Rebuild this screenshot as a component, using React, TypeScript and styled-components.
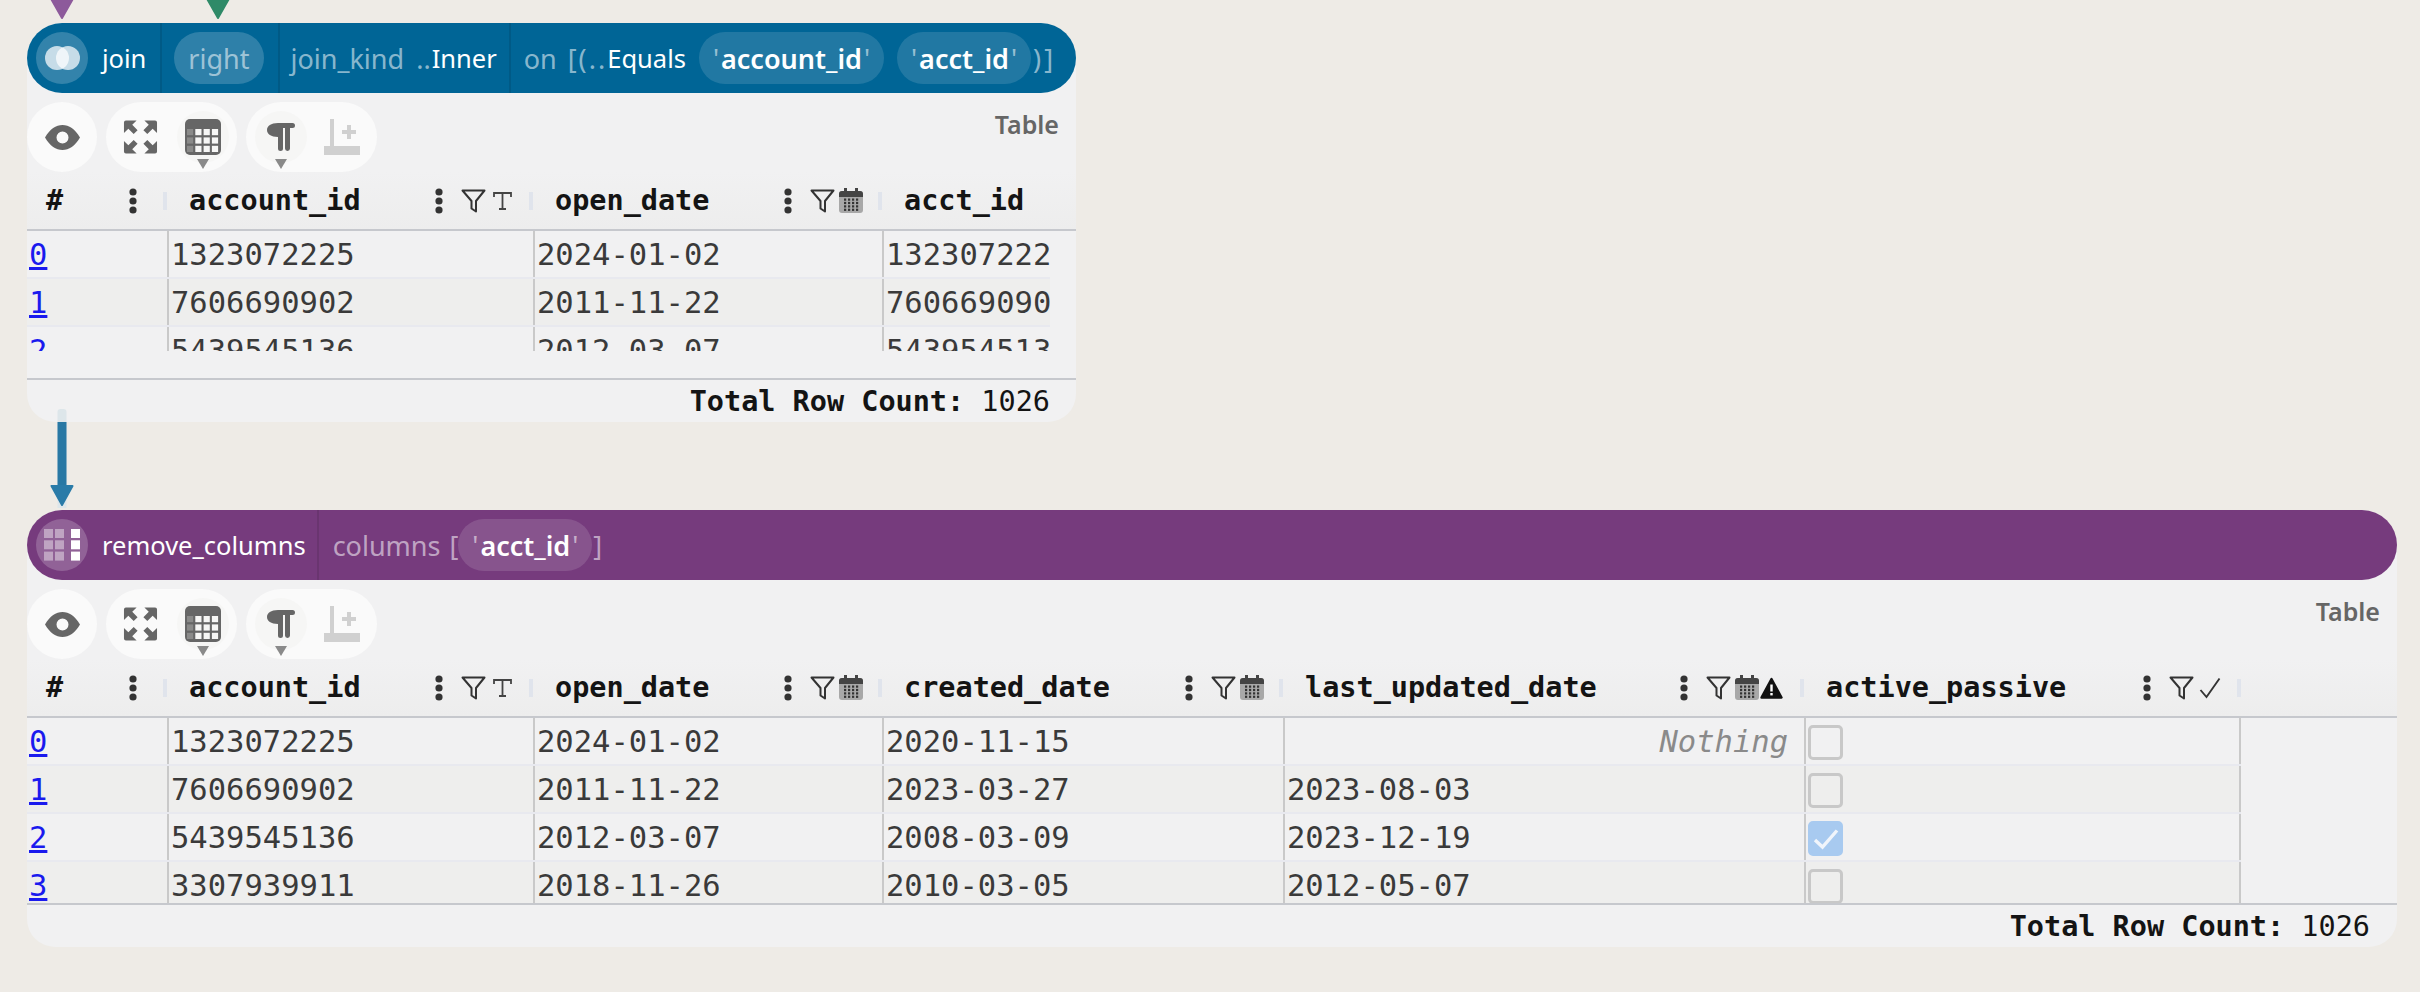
import React from 'react';
import styled, { createGlobalStyle } from 'styled-components';

const GlobalStyle = createGlobalStyle`
  html, body {
    margin: 0;
    padding: 0;
    background: #eeebe6;
  }
`;

const Canvas = styled.div`
  width: 2420px;
  height: 992px;
  padding-left: 27px;
  box-sizing: border-box;
  overflow: hidden;
`;

const EdgeGap = styled.div<{ $height: number }>`
  position: relative;
  height: ${(p) => p.$height}px;
`;

const EdgeSvg = styled.svg<{ $left: number; $top: number }>`
  position: absolute;
  left: ${(p) => p.$left}px;
  top: ${(p) => p.$top}px;
`;

const Panel = styled.section<{ $width: number }>`
  width: ${(p) => p.$width}px;
  background: #f1f1f2;
  border-radius: 35px 35px 28px 28px;
  display: flex;
  flex-direction: column;
`;

const NodeHeader = styled.header<{ $bg: string }>`
  height: 70px;
  border-radius: 35px;
  background: ${(p) => p.$bg};
  display: flex;
  align-items: stretch;
  font: 400 25.5px 'Noto Sans', sans-serif;
  color: #fff;
  white-space: nowrap;
`;

const Segment = styled.div<{ $pl?: number; $pr?: number; $last?: boolean }>`
  display: flex;
  align-items: center;
  padding-left: ${(p) => p.$pl ?? 11}px;
  padding-right: ${(p) => p.$pr ?? 14}px;
  border-right: ${(p) => (p.$last ? 'none' : '2px solid rgba(0, 0, 0, 0.1)')};
`;

const IconCircle = styled.div`
  width: 52px;
  height: 52px;
  border-radius: 50%;
  background: rgba(255, 255, 255, 0.2);
  display: flex;
  align-items: center;
  justify-content: center;
  margin-right: 14px;
`;

const Dim = styled.span<{ $ml?: number; $ls?: number }>`
  color: rgba(255, 255, 255, 0.55);
  font-size: 27px;
  font-weight: 400;
  margin-left: ${(p) => p.$ml ?? 0}px;
  letter-spacing: ${(p) => p.$ls ?? 0}px;
`;

const Bright = styled.span<{ $mx?: number; $ml?: number }>`
  color: #fff;
  margin: 0 ${(p) => p.$mx ?? 0}px 0 ${(p) => p.$ml ?? p.$mx ?? 0}px;
`;

const Chip = styled.span<{ $ml?: number; $tint?: number; $bold?: boolean }>`
  height: 52px;
  border-radius: 26px;
  padding: 0 14px;
  display: inline-flex;
  align-items: center;
  background: rgba(255, 255, 255, ${(p) => p.$tint ?? 0.13});
  margin-left: ${(p) => p.$ml ?? 0}px;
  font-size: 27px;
  font-weight: ${(p) => (p.$bold ? 600 : 400)};
`;

const Toolbar = styled.div`
  height: 70px;
  margin-top: 9px;
  display: flex;
  gap: 9px;
  position: relative;
`;

const ToolPill = styled.div<{ $width: number }>`
  width: ${(p) => p.$width}px;
  height: 70px;
  border-radius: 35px;
  background: #fafafa;
  display: flex;
  align-items: center;
`;

const ToolSlot = styled.div<{ $width: number; $ring?: boolean; $ml?: number }>`
  width: ${(p) => p.$width}px;
  height: 52px;
  margin-left: ${(p) => p.$ml ?? 0}px;
  border-radius: 26px;
  background: ${(p) => (p.$ring ? '#f6f6f5' : 'transparent')};
  display: flex;
  align-items: center;
  justify-content: center;
  position: relative;
`;

const Caret = styled.span`
  position: absolute;
  left: 50%;
  bottom: -6px;
  margin-left: -6px;
  border-left: 6px solid transparent;
  border-right: 6px solid transparent;
  border-top: 10px solid #8a8a8a;
`;

const TableLabel = styled.div`
  margin: 0 17px 0 auto;
  padding-top: 5px;
  font: 600 25px 'Noto Sans', sans-serif;
  color: #666;
`;

const HeadRow = styled.div<{ $cols: string }>`
  height: 57px;
  display: grid;
  grid-template-columns: ${(p) => p.$cols};
  background: linear-gradient(#f1f1f2, #ededed);
  border-bottom: 2px solid #c6c8cd;
`;

const HeadCell = styled.div<{ $pl: number }>`
  display: flex;
  align-items: center;
  padding-left: ${(p) => p.$pl}px;
  font: 700 28.5px 'DejaVu Sans Mono', monospace;
  color: #141414;
  min-width: 0;
`;

const HeadName = styled.span`
  flex: 1;
  white-space: pre;
`;

const Kebab = styled.svg<{ $mr: number }>`
  flex: none;
  margin-right: ${(p) => p.$mr}px;
`;

const FilterSvg = styled.svg`
  flex: none;
  margin-right: 4px;
`;

const TypeSvg = styled.svg<{ $ml?: number }>`
  flex: none;
  margin-left: ${(p) => p.$ml ?? 0}px;
`;

const TypeIcons = styled.div<{ $width: number }>`
  width: ${(p) => p.$width}px;
  display: flex;
  align-items: center;
  gap: 4px;
`;

const ColSep = styled.span`
  flex: none;
  width: 4px;
  height: 18px;
  background: #e0e4ec;
`;

const TableBody = styled.div<{ $height: number; $width: number }>`
  height: ${(p) => p.$height}px;
  width: ${(p) => p.$width}px;
  overflow: hidden;
`;

const Row = styled.div<{ $cols: string; $odd: boolean }>`
  height: 48px;
  box-sizing: border-box;
  display: grid;
  grid-template-columns: ${(p) => p.$cols};
  background: ${(p) => (p.$odd ? '#eeeeed' : '#f1f1f2')};
  border-bottom: 2px solid #e8e9ef;
`;

const Cell = styled.div<{ $closed?: boolean; $index?: boolean }>`
  border-left: ${(p) => (p.$index ? 'none' : '2px solid #c9c9c9')};
  border-right: ${(p) => (p.$closed ? '2px solid #c9c9c9' : 'none')};
  padding-left: 2px;
  font: 400 30.5px/48px 'DejaVu Sans Mono', monospace;
  color: #3a3a3a;
  overflow: hidden;
  white-space: nowrap;
`;

const IndexLink = styled.a`
  color: #1a1aee;
  text-decoration: underline;
`;

const Missing = styled.div`
  text-align: right;
  padding-right: 16px;
  font-style: italic;
  color: #8a8a8a;
`;

const Check = styled.div<{ $on: boolean }>`
  width: 35px;
  height: 35px;
  box-sizing: border-box;
  margin: 7px 0 0 0;
  border-radius: 5px;
  border: 3px solid ${(p) => (p.$on ? '#a8caf0' : '#c8c8c8')};
  background: ${(p) => (p.$on ? '#a8caf0' : 'transparent')};
  display: flex;
  align-items: center;
  justify-content: center;
`;

const Footer = styled.div<{ $gap: number; $pr: number }>`
  height: 42px;
  margin-top: ${(p) => p.$gap}px;
  border-top: 2px solid #c6c8cd;
  padding-right: ${(p) => p.$pr}px;
  display: flex;
  align-items: center;
  justify-content: flex-end;
  font: 400 28.5px 'DejaVu Sans Mono', monospace;
  color: #141414;
  white-space: pre;
`;

const FooterLabel = styled.b`
  font-weight: 700;
`;

const KebabIcon = ({ mr = 18 }: { mr?: number }) => (
  <Kebab $mr={mr} width="8" height="26" viewBox="0 0 8 26">
    <circle cx="4" cy="4" r="3.6" fill="#333" />
    <circle cx="4" cy="13" r="3.6" fill="#333" />
    <circle cx="4" cy="22" r="3.6" fill="#333" />
  </Kebab>
);

const FilterIcon = () => (
  <FilterSvg width="25" height="24" viewBox="0 0 25 24">
    <path d="M1.5 1.5H23.5L15 12V22.5L10.5 19.5V12Z" fill="none" stroke="#333" strokeWidth="2" strokeLinejoin="round" />
  </FilterSvg>
);

const TextTypeIcon = () => (
  <TypeSvg width="24" height="20" viewBox="0 0 24 20">
    <path d="M4 6V2H21V6M12.5 2V18M9 18H16" fill="none" stroke="#444" strokeWidth="1.8" />
  </TypeSvg>
);

const CalendarIcon = () => (
  <TypeSvg width="24" height="25" viewBox="0 0 24 25">
    <rect x="0" y="3" width="24" height="22" rx="3" fill="#a8a8a8" />
    <path d="M0 9V6a3 3 0 0 1 3-3h18a3 3 0 0 1 3 3v3Z" fill="#444" />
    <rect x="5" y="0" width="3" height="5" fill="#444" />
    <rect x="16" y="0" width="3" height="5" fill="#444" />
    {[0, 1, 2, 3].flatMap((r) =>
      [0, 1, 2, 3].map((c) => (
        <rect key={`${r}-${c}`} x={5 + c * 4} y={10.5 + r * 3.4} width="2.2" height="2.2" fill="#333" />
      ))
    )}
  </TypeSvg>
);

const WarningIcon = () => (
  <TypeSvg $ml={-3} width="23" height="22" viewBox="0 0 23 22">
    <path d="M11.5 2L21.5 20.5H1.5Z" fill="#111" stroke="#111" strokeWidth="2.4" strokeLinejoin="round" />
    <rect x="10.3" y="7.5" width="2.4" height="7" fill="#fff" />
    <rect x="10.3" y="16" width="2.4" height="2.4" fill="#fff" />
  </TypeSvg>
);

const BoolTypeIcon = () => (
  <TypeSvg $ml={1} width="22" height="22" viewBox="0 0 22 22">
    <path d="M1.5 13L7.5 20L20.5 1.5" fill="none" stroke="#333" strokeWidth="1.9" />
  </TypeSvg>
);

const EyeIcon = () => (
  <svg width="35" height="25" viewBox="0 0 35 25">
    <path
      fillRule="evenodd"
      d="M0 12.5C5 4 11 0 17.5 0S30 4 35 12.5C30 21 24 25 17.5 25S5 21 0 12.5ZM17.5 6.5a6 6 0 1 0 0 12a6 6 0 0 0 0-12Z"
      fill="#666"
    />
  </svg>
);

const cornerArrow = 'M1 3a2 2 0 0 1 2-2H14L9.5 5.5L15 11L11 15L5.5 9.5L1 14Z';

const ExpandIcon = () => (
  <svg width="35" height="36" viewBox="0 0 36 36" fill="#666" style={{ marginRight: 3 }}>
    <path d={cornerArrow} />
    <path transform="matrix(-1 0 0 1 36 0)" d={cornerArrow} />
    <path transform="matrix(1 0 0 -1 0 36)" d={cornerArrow} />
    <path transform="matrix(-1 0 0 -1 36 36)" d={cornerArrow} />
  </svg>
);

const TableIcon = () => (
  <svg width="36" height="36" viewBox="0 0 36 36">
    <rect width="36" height="36" rx="5" fill="#666" />
    {[0, 1, 2].flatMap((r) =>
      [0, 1, 2, 3].map((c) => (
        <rect
          key={`${r}-${c}`}
          x={2 + c * 8.3}
          y={10 + r * 8.4}
          width="6.2"
          height="6.2"
          fill="#f6f6f5"
          fillOpacity={c === 0 ? 0.25 : 1}
        />
      ))
    )}
  </svg>
);

const PilcrowIcon = () => (
  <svg width="28" height="28" viewBox="0 0 28 28">
    <path
      d="M11 0H25.5a2.5 2.5 0 0 1 0 5H23V25.5a2.5 2.5 0 0 1-5 0V5H16V25.5a2.5 2.5 0 0 1-5 0V14C4 14 0 11 0 7S4 0 11 0Z"
      fill="#666"
    />
  </svg>
);

const AddColumnIcon = () => (
  <svg width="36" height="36" viewBox="0 0 36 36" fill="#d0d0d0">
    <rect x="0" y="27" width="36" height="9" />
    <rect x="6" y="0" width="4" height="27" />
    <rect x="18" y="11" width="14" height="4" />
    <rect x="23" y="6" width="4" height="14" />
  </svg>
);

const JoinIcon = () => (
  <svg width="35" height="24" viewBox="0 0 35 24">
    <circle cx="12" cy="12" r="12" fill="#fff" fillOpacity="0.72" />
    <circle cx="23" cy="12" r="12" fill="#fff" fillOpacity="0.72" />
  </svg>
);

const RemoveColumnsIcon = () => (
  <svg width="36" height="32" viewBox="0 0 36 32" fill="#fff">
    {[0, 1, 2].flatMap((r) =>
      [0, 11, 27].map((x) => (
        <rect key={`${r}-${x}`} x={x} y={r * 11.3} width="9" height="9" fillOpacity={x === 27 ? 1 : 0.42} />
      ))
    )}
  </svg>
);

const EdgeArrow = ({ color, left, top }: { color: string; left: number; top: number }) => (
  <EdgeSvg $left={left} $top={top} width="24" height="22" viewBox="0 0 24 22">
    <path d="M1.5 1.5H22.5L12 20Z" fill={color} stroke={color} strokeWidth="2" strokeLinejoin="round" />
  </EdgeSvg>
);

type TypeKind = 'text' | 'date' | 'dateWarn' | 'bool';

interface Column {
  name: string;
  kind?: TypeKind;
}

const typeIcons = (kind: TypeKind) => {
  if (kind === 'text') return <TextTypeIcon />;
  if (kind === 'date') return <CalendarIcon />;
  if (kind === 'bool') return <BoolTypeIcon />;
  return (
    <>
      <CalendarIcon />
      <WarningIcon />
    </>
  );
};

const Tools = () => (
  <Toolbar>
    <ToolPill $width={70}>
      <ToolSlot $width={70}>
        <EyeIcon />
      </ToolSlot>
    </ToolPill>
    <ToolPill $width={131}>
      <ToolSlot $width={71}>
        <ExpandIcon />
      </ToolSlot>
      <ToolSlot $width={52} $ring>
        <TableIcon />
        <Caret />
      </ToolSlot>
    </ToolPill>
    <ToolPill $width={131}>
      <ToolSlot $width={52} $ring $ml={9}>
        <PilcrowIcon />
        <Caret />
      </ToolSlot>
      <ToolSlot $width={70}>
        <AddColumnIcon />
      </ToolSlot>
    </ToolPill>
    <TableLabel>Table</TableLabel>
  </Toolbar>
);

const TableHead = ({ cols, columns }: { cols: string; columns: Column[] }) => (
  <HeadRow $cols={cols}>
    <HeadCell $pl={19}>
      <HeadName>#</HeadName>
      <KebabIcon mr={26} />
      <ColSep />
    </HeadCell>
    {columns.map((c) => (
      <HeadCell key={c.name} $pl={22}>
        <HeadName>{c.name}</HeadName>
        {c.kind && (
          <>
            <KebabIcon />
            <FilterIcon />
            <TypeIcons $width={c.kind === 'dateWarn' ? 65 : 39}>{typeIcons(c.kind)}</TypeIcons>
            <ColSep />
          </>
        )}
      </HeadCell>
    ))}
  </HeadRow>
);

const Quoted = ({ text, ml }: { text: string; ml?: number }) => (
  <Chip $ml={ml} $bold>
    <Dim>'</Dim>
    <Bright $mx={2}>{text}</Bright>
    <Dim>'</Dim>
  </Chip>
);

const topCols = '140px 366px 349px 168px';
const bottomCols = '140px 366px 349px 401px 521px 437px';

const topColumns: Column[] = [
  { name: 'account_id', kind: 'text' },
  { name: 'open_date', kind: 'date' },
  { name: 'acct_id' },
];

const bottomColumns: Column[] = [
  { name: 'account_id', kind: 'text' },
  { name: 'open_date', kind: 'date' },
  { name: 'created_date', kind: 'date' },
  { name: 'last_updated_date', kind: 'dateWarn' },
  { name: 'active_passive', kind: 'bool' },
];

const topRows = [
  ['1323072225', '2024-01-02', '1323072225'],
  ['7606690902', '2011-11-22', '7606690902'],
  ['5439545136', '2012-03-07', '5439545136'],
];

const bottomRows: [string, string, string, string | null, boolean][] = [
  ['1323072225', '2024-01-02', '2020-11-15', null, false],
  ['7606690902', '2011-11-22', '2023-03-27', '2023-08-03', false],
  ['5439545136', '2012-03-07', '2008-03-09', '2023-12-19', true],
  ['3307939911', '2018-11-26', '2010-03-05', '2012-05-07', false],
];

export default function App() {
  return (
    <Canvas>
      <GlobalStyle />
      <EdgeGap $height={23}>
        <EdgeArrow color="#8d5a9b" left={23} top={-2} />
        <EdgeArrow color="#2f8a68" left={179} top={-2} />
      </EdgeGap>

      <Panel $width={1049}>
        <NodeHeader $bg="#006596">
          <Segment $pl={9} $pr={14}>
            <IconCircle>
              <JoinIcon />
            </IconCircle>
            join
          </Segment>
          <Segment $pl={12} $pr={14}>
            <Chip $tint={0.18}>
              <Dim>right</Dim>
            </Chip>
          </Segment>
          <Segment $pr={12}>
            <Dim>join_kind</Dim>
            <Dim $ml={12}>..</Dim>
            <Bright $ml={1}>Inner</Bright>
          </Segment>
          <Segment $last $pl={13}>
            <Dim>on</Dim>
            <Dim $ml={11} $ls={2}>[(..</Dim>
            <Bright>Equals</Bright>
            <Quoted text="account_id" ml={13} />
            <Quoted text="acct_id" ml={13} />
            <Dim $ml={2} $ls={3}>)]</Dim>
          </Segment>
        </NodeHeader>
        <Tools />
        <TableHead cols={topCols} columns={topColumns} />
        <TableBody $height={120} $width={1023}>
          {topRows.map((r, i) => (
            <Row key={r[0]} $cols={topCols} $odd={i % 2 === 1}>
              <Cell $index>
                <IndexLink href="#">{i}</IndexLink>
              </Cell>
              {r.map((v, j) => (
                <Cell key={j}>{v}</Cell>
              ))}
            </Row>
          ))}
        </TableBody>
        <Footer $gap={27} $pr={26}>
          <FooterLabel>Total Row Count:</FooterLabel> 1026
        </Footer>
      </Panel>

      <EdgeGap $height={88}>
        <EdgeSvg $left={23} $top={-14} width="24" height="100" viewBox="0 0 24 100">
          <path d="M7.5 100V4a3 3 0 0 1 3-3h3a3 3 0 0 1 3 3V100Z" fill="#dde6ea" />
          <rect x="7.5" y="14" width="9" height="66" fill="#2878a4" />
          <path d="M1.5 78H22.5L12 97Z" fill="#2a7ba8" stroke="#2a7ba8" strokeWidth="2" strokeLinejoin="round" />
        </EdgeSvg>
      </EdgeGap>

      <Panel $width={2370}>
        <NodeHeader $bg="#763b7d">
          <Segment $pl={9} $pr={11}>
            <IconCircle>
              <RemoveColumnsIcon />
            </IconCircle>
            remove_columns
          </Segment>
          <Segment $last $pl={14}>
            <Dim>columns</Dim>
            <Dim $ml={9}>[</Dim>
            <Quoted text="acct_id" />
            <Dim $ml={1}>]</Dim>
          </Segment>
        </NodeHeader>
        <Tools />
        <TableHead cols={bottomCols} columns={bottomColumns} />
        <TableBody $height={185} $width={2214}>
          {bottomRows.map((r, i) => (
            <Row key={r[0]} $cols={bottomCols} $odd={i % 2 === 1}>
              <Cell $index>
                <IndexLink href="#">{i}</IndexLink>
              </Cell>
              <Cell>{r[0]}</Cell>
              <Cell>{r[1]}</Cell>
              <Cell>{r[2]}</Cell>
              <Cell>{r[3] ?? <Missing>Nothing</Missing>}</Cell>
              <Cell $closed>
                <Check $on={r[4]}>
                  {r[4] && (
                    <svg width="26" height="22" viewBox="0 0 26 22">
                      <path d="M2 12L9.5 19L24 2.5" fill="none" stroke="#f1f5fb" strokeWidth="3.4" />
                    </svg>
                  )}
                </Check>
              </Cell>
            </Row>
          ))}
        </TableBody>
        <Footer $gap={0} $pr={27}>
          <FooterLabel>Total Row Count:</FooterLabel> 1026
        </Footer>
      </Panel>
    </Canvas>
  );
}
